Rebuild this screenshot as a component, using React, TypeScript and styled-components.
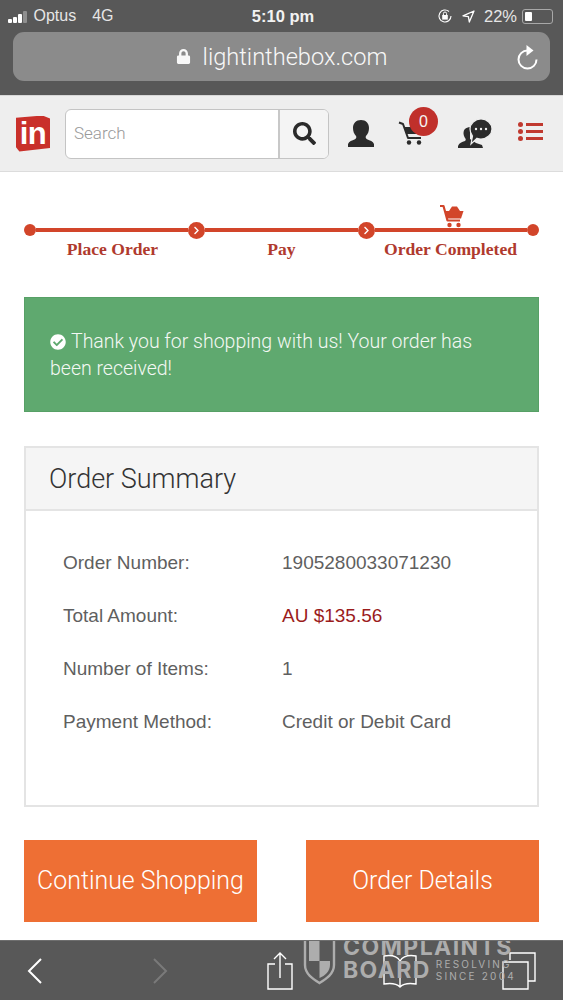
import React from 'react'
import styled, { createGlobalStyle } from 'styled-components'
import { FaCheckCircle, FaSearch, FaLock, FaChevronRight } from 'react-icons/fa'

const GlobalStyle = createGlobalStyle`
  html, body {
    margin: 0;
    padding: 0;
    background: #fff;
  }
  * {
    box-sizing: border-box;
  }
`

const summary = [
  { label: 'Order Number:', value: '1905280033071230' },
  { label: 'Total Amount:', value: 'AU $135.56', accent: true },
  { label: 'Number of Items:', value: '1' },
  { label: 'Payment Method:', value: 'Credit or Debit Card' },
]

const UserIcon = () => (
  <svg width="26" height="27" viewBox="0 0 26 27">
    <path
      d="M13 0c5 0 8 3.5 8 8 0 3-1 6-3 8-.6 1-.4 2.5 1 3.2 3 1.3 6 2 7 4.8v3H0v-3c1-2.8 4-3.5 7-4.8 1.4-.7 1.6-2.200 1-3.200-2-2-3-5-3-8 0-4.500 3-8 8-8z"
      fill="#2b2b2b"
    />
  </svg>
)

const CartIcon = () => (
  <svg width="26" height="24" viewBox="0 0 26 24" fill="none">
    <path d="M1 1.5l4 1.500 5 14h13" stroke="#2b2b2b" strokeWidth="2" strokeLinejoin="round" />
    <path d="M6 6h19l-2 7H8.5z" fill="#2b2b2b" />
    <circle cx="11" cy="21.5" r="2.2" fill="#2b2b2b" />
    <circle cx="21" cy="21.5" r="2.2" fill="#2b2b2b" />
  </svg>
)

const ChatUser = () => (
  <svg width="35" height="30" viewBox="0 0 35 30">
    <path
      d="M0 29v-2c1-3 4-4 7-5 1-1 1-2 0-3-2-3-2-7 0-9 1-1 3-2 5-2v12l6 4 6 2 1 3z"
      fill="#2b2b2b"
    />
    <path
      d="M23 0c6 0 11 4.5 11 10s-5 10-11 10c-1.500 0-3-.3-4-.7L13 25l1.500-8C13 15 12 12.500 12 10 12 4.500 17 0 23 0z"
      fill="#2b2b2b"
      stroke="#eeeeee"
      strokeWidth="1.2"
    />
    <circle cx="18" cy="10" r="1.2" fill="#eee" />
    <circle cx="23" cy="10" r="1.2" fill="#eee" />
    <circle cx="28" cy="10" r="1.2" fill="#eee" />
  </svg>
)

const StepCart = () => (
  <svg width="25" height="24" viewBox="0 0 25 24" fill="none">
    <path d="M1 2h3.5l4 14.500h12.500" stroke="#d2452a" strokeWidth="2.2" strokeLinejoin="round" />
    <path d="M6 7h18.5l-2.500 7.500H8z" fill="#d2452a" />
    <path d="M10 7l3-4.500h5L21 7z" fill="#d2452a" />
    <circle cx="10.5" cy="21" r="2.2" fill="#d2452a" />
    <circle cx="19.5" cy="21" r="2.2" fill="#d2452a" />
  </svg>
)

const Reload = () => (
  <svg width="24" height="26" viewBox="0 0 24 26" fill="none">
    <path d="M12.5 6.5a9 9 0 1 0 9 9" stroke="#fff" strokeWidth="2" />
    <path d="M11.5 1l7 5.500-7 5.500z" fill="#fff" />
  </svg>
)

const Watermark = () => (
  <WatermarkWrap>
    <svg width="33" height="46" viewBox="0 0 33 46" fill="none">
      <path d="M2 0v26c0 9 8 14 14.5 18C23 40 31 35 31 26V0" stroke="#adadad" strokeWidth="2.4" />
      <path d="M6 2h10.500v20H6z" fill="#adadad" />
      <path d="M16.5 22H27v4c0 6-5 11-10.500 13z" fill="#adadad" />
    </svg>
    <WatermarkText>
      <WatermarkTitle>COMPLAINTS</WatermarkTitle>
      <WatermarkRow>
        <WatermarkTitle>BOARD</WatermarkTitle>
        <WatermarkSmall>RESOLVING<br />SINCE 2004</WatermarkSmall>
      </WatermarkRow>
    </WatermarkText>
  </WatermarkWrap>
)

export default function App() {
  return (
    <Page>
      <GlobalStyle />
      <BrowserTop>
        <StatusBar>
          <StatusLeft>
            <Signal>
              {[4, 6, 9, 12].map((h, i) => (
                <SignalBar key={h} $height={h} $off={i === 3} />
              ))}
            </Signal>
            <span>Optus</span>
            <NetworkType>4G</NetworkType>
          </StatusLeft>
          <Clock>5:10 pm</Clock>
          <StatusRight>
            <svg width="16" height="16" viewBox="0 0 16 16" fill="none">
              <path d="M14 8a6 6 0 1 1-2-4.500" stroke="#fff" strokeWidth="1.1" />
              <rect x="5.2" y="7" width="5.6" height="4.6" fill="#fff" />
              <path d="M6.4 7V5.600a1.600 1.600 0 0 1 3.200 0V7" stroke="#fff" strokeWidth="1" />
            </svg>
            <svg width="13" height="13" viewBox="0 0 13 13" fill="none">
              <path d="M12 1L1 5.800l5.400.8.9 5.400z" stroke="#fff" strokeWidth="1.3" strokeLinejoin="round" />
            </svg>
            <span>22%</span>
            <Battery>
              <BatteryFill />
            </Battery>
          </StatusRight>
        </StatusBar>
        <UrlBar>
          <UrlText>
            <FaLock size={15} />
            <span>lightinthebox.com</span>
          </UrlText>
          <ReloadSlot>
            <Reload />
          </ReloadSlot>
        </UrlBar>
      </BrowserTop>

      <SiteHeader>
        <Logo>in</Logo>
        <SearchBox>
          <SearchInput>Search</SearchInput>
          <SearchButton>
            <FaSearch size={23} color="#2b2b2b" />
          </SearchButton>
        </SearchBox>
        <HeaderIcons>
          <UserIcon />
          <CartWrap>
            <CartIcon />
            <CartBadge>0</CartBadge>
          </CartWrap>
          <ChatUser />
          <MenuIcon>
            {[0, 1, 2].map((i) => (
              <MenuLine key={i}>
                <MenuDot />
                <MenuBar />
              </MenuLine>
            ))}
          </MenuIcon>
        </HeaderIcons>
      </SiteHeader>

      <Main>
        <Steps>
          <StepTrack>
            <TrackCart>
              <StepCart />
            </TrackCart>
            <TrackDot />
            <TrackLine />
            <TrackChevron>
              <FaChevronRight size={9} color="#fff" />
            </TrackChevron>
            <TrackLine />
            <TrackChevron>
              <FaChevronRight size={9} color="#fff" />
            </TrackChevron>
            <TrackLine />
            <TrackDot />
          </StepTrack>
          <StepLabels>
            <StepLabel>Place Order</StepLabel>
            <StepLabel>Pay</StepLabel>
            <StepLabel>Order Completed</StepLabel>
          </StepLabels>
        </Steps>

        <Alert>
          <AlertIcon>
            <FaCheckCircle size={16} color="#fff" />
          </AlertIcon>
          Thank you for shopping with us! Your order has been received!
        </Alert>

        <Panel>
          <PanelHead>Order Summary</PanelHead>
          <PanelBody>
            {summary.map((row) => (
              <SummaryRow key={row.label}>
                <SummaryLabel>{row.label}</SummaryLabel>
                <SummaryValue $accent={row.accent}>{row.value}</SummaryValue>
              </SummaryRow>
            ))}
          </PanelBody>
        </Panel>

        <Actions>
          <ActionButton>Continue Shopping</ActionButton>
          <ActionButton>Order Details</ActionButton>
        </Actions>
      </Main>

      <Toolbar>
        <ToolSlot>
          <svg width="18" height="28" viewBox="0 0 18 28" fill="none">
            <path d="M15 2L3 14l12 12" stroke="#fff" strokeWidth="2" />
          </svg>
        </ToolSlot>
        <ToolSlot>
          <svg width="18" height="28" viewBox="0 0 18 28" fill="none">
            <path d="M3 2l12 12L3 26" stroke="#7a7a7a" strokeWidth="2" />
          </svg>
        </ToolSlot>
        <ToolSlot>
          <svg width="28" height="40" viewBox="0 0 28 40" fill="none">
            <path d="M9 13H2v25h24V13h-7" stroke="#fff" strokeWidth="1.4" />
            <path d="M14 27V2M8 8l6-6 6 6" stroke="#fff" strokeWidth="1.4" />
          </svg>
        </ToolSlot>
        <ToolSlot>
          <svg width="36" height="36" viewBox="0 0 36 36" fill="none">
            <path d="M18 8C15 3 8 2 2 3v28c6-1 12-1 16 3 4-4 10-4 16-3V3c-6-1-13 0-16 5zM18 8v26" stroke="#fff" strokeWidth="1.4" />
          </svg>
        </ToolSlot>
        <ToolSlot>
          <svg width="36" height="38" viewBox="0 0 36 38" fill="none">
            <path d="M9 8V1h25v28h-7" stroke="#fff" strokeWidth="1.4" />
            <path d="M2 10h25v27H2z" stroke="#fff" strokeWidth="1.4" />
          </svg>
        </ToolSlot>
        <Watermark />
      </Toolbar>
    </Page>
  )
}

const Page = styled.div`
  position: relative;
  width: 563px;
  height: 1000px;
  overflow: hidden;
  display: flex;
  flex-direction: column;
  font-family: 'Liberation Sans', Arial, sans-serif;
  background: #fff;
`

const BrowserTop = styled.div`
  height: 95px;
  flex: none;
  background: #585858;
  color: #fff;
  padding: 0 13px;
`

const StatusBar = styled.div`
  height: 32px;
  margin: 0 -5px;
  display: grid;
  grid-template-columns: 1fr auto 1fr;
  align-items: center;
  font-size: 16px;
`

const StatusLeft = styled.div`
  display: flex;
  align-items: center;
  gap: 6px;
  color: #e6e6e6;
`

const Signal = styled.div`
  display: flex;
  align-items: flex-end;
  gap: 1.5px;
  height: 13px;
  margin-right: 1px;
`

const SignalBar = styled.span<{ $height: number; $off?: boolean }>`
  width: 3.5px;
  height: ${(p) => p.$height}px;
  border-radius: 1px;
  background: ${(p) => (p.$off ? '#8f8f8f' : '#fff')};
`

const NetworkType = styled.span`
  margin-left: 10px;
`

const Clock = styled.div`
  font-weight: 700;
  font-size: 16.5px;
  color: #f2f2f2;
  margin-left: 3px;
`

const StatusRight = styled.div`
  display: flex;
  justify-content: flex-end;
  align-items: center;
  gap: 9px;
  color: #e6e6e6;
  font-size: 16.5px;
  margin-right: 2px;
`

const Battery = styled.div`
  width: 31px;
  height: 15px;
  margin-left: -4px;
  padding: 2px;
  border: 1px solid #a8a8a8;
  border-radius: 3px;
`

const BatteryFill = styled.div`
  width: 7px;
  height: 100%;
  background: #fff;
  border-radius: 1px;
`

const UrlBar = styled.div`
  position: relative;
  height: 49px;
  border-radius: 11px;
  background: #8b8b8b;
  display: flex;
  align-items: center;
  justify-content: center;
`

const UrlText = styled.div`
  display: flex;
  align-items: center;
  gap: 12px;
  font-family: Roboto, 'Liberation Sans', sans-serif;
  font-weight: 300;
  font-size: 23.6px;
  color: #f8f8f8;
`

const ReloadSlot = styled.div`
  position: absolute;
  right: 11px;
  top: 12px;
  display: flex;
`

const SiteHeader = styled.header`
  height: 77px;
  flex: none;
  background: #eeeeee;
  border-bottom: 1px solid #dcdcdc;
  border-top: 1px solid #d8d8d8;
  padding: 0 16px;
  display: flex;
  align-items: center;
`

const Logo = styled.div`
  width: 34px;
  height: 36px;
  flex: none;
  background: #c9302a;
  color: #fff;
  font-weight: 700;
  font-size: 31px;
  line-height: 35px;
  text-align: center;
  letter-spacing: -0.5px;
  clip-path: polygon(0 6%, 78% 0, 100% 8%, 100% 90%, 10% 100%, 0 88%);
`

const SearchBox = styled.div`
  width: 264px;
  height: 50px;
  margin-left: 15px;
  flex: none;
  display: flex;
  background: #fff;
  border: 1px solid #c4c4c4;
  border-radius: 6px;
  overflow: hidden;
`

const SearchInput = styled.div`
  flex: 1;
  padding-left: 8px;
  font-family: Roboto, 'Liberation Sans', sans-serif;
  font-weight: 300;
  font-size: 17px;
  line-height: 46px;
  color: #9a9a9a;
  border-right: 2px solid #c8c8c8;
`

const SearchButton = styled.div`
  width: 48px;
  flex: none;
  background: #f4f4f4;
  display: flex;
  align-items: center;
  justify-content: center;
`

const HeaderIcons = styled.div`
  display: flex;
  align-items: center;
  margin-left: 19px;
  gap: 24px;
`

const CartWrap = styled.div`
  position: relative;
  display: flex;
  margin: -2px 10px 0 0;
`

const CartBadge = styled.span`
  position: absolute;
  top: -14px;
  left: 11px;
  width: 29px;
  height: 29px;
  border-radius: 50%;
  background: #c0302b;
  color: #f5f5f5;
  font-size: 16px;
  line-height: 29px;
  text-align: center;
`

const MenuIcon = styled.div`
  display: flex;
  flex-direction: column;
  gap: 2px;
  margin: -5px 0 0 1px;
`

const MenuLine = styled.div`
  display: flex;
  align-items: center;
  gap: 3px;
`

const MenuDot = styled.span`
  width: 5px;
  height: 5px;
  border-radius: 50%;
  background: #c0392f;
`

const MenuBar = styled.span`
  width: 17px;
  height: 3px;
  background: #c0392f;
`

const Main = styled.main`
  flex: 1;
  padding: 0 24px;
  display: flex;
  flex-direction: column;
`

const Steps = styled.div`
  height: 125px;
  flex: none;
  padding-top: 50px;
`

const StepTrack = styled.div`
  position: relative;
  height: 16px;
  display: flex;
  align-items: center;
`

const TrackCart = styled.div`
  position: absolute;
  top: -18px;
  left: 415px;
  display: flex;
`

const TrackDot = styled.span`
  width: 12px;
  height: 12px;
  flex: none;
  border-radius: 50%;
  background: #d2452a;
`

const TrackLine = styled.span`
  flex: 1;
  height: 4px;
  background: #d2452a;
`

const TrackChevron = styled.span`
  width: 17px;
  height: 17px;
  flex: none;
  border-radius: 50%;
  background: #d2452a;
  display: flex;
  align-items: center;
  justify-content: center;
`

const StepLabels = styled.div`
  display: grid;
  grid-template-columns: repeat(3, 1fr);
  margin: 1px 4px 0;
`

const StepLabel = styled.div`
  text-align: center;
  font-family: 'Liberation Serif', 'Times New Roman', serif;
  font-weight: 700;
  font-size: 17.6px;
  line-height: 20px;
  color: #b03a2e;
`

const Alert = styled.div`
  height: 115px;
  flex: none;
  padding: 30px 25px 0;
  background: #5fa96f;
  border: 1px solid #57a066;
  color: #f4f8f4;
  font-family: Roboto, 'Liberation Sans', sans-serif;
  font-weight: 300;
  font-size: 19.5px;
  line-height: 27px;
`

const AlertIcon = styled.span`
  display: inline-flex;
  vertical-align: -2px;
  margin-right: 5px;
`

const Panel = styled.section`
  height: 361px;
  flex: none;
  margin-top: 34px;
  border: 2px solid #e4e4e4;
  display: flex;
  flex-direction: column;
`

const PanelHead = styled.h2`
  margin: 0;
  height: 63px;
  flex: none;
  padding: 0 23px;
  background: #f5f5f5;
  border-bottom: 2px solid #e4e4e4;
  font-family: Roboto, 'Liberation Sans', sans-serif;
  font-size: 27px;
  font-weight: 300;
  line-height: 62px;
  color: #333;
`

const PanelBody = styled.div`
  padding: 25px 37px 0;
  display: flex;
  flex-direction: column;
`

const SummaryRow = styled.div`
  height: 53px;
  display: grid;
  grid-template-columns: 219px 1fr;
  align-items: center;
  font-size: 19px;
  color: #5f5f5f;
`

const SummaryLabel = styled.div``

const SummaryValue = styled.div<{ $accent?: boolean }>`
  color: ${(p) => (p.$accent ? '#9b1c1c' : '#5f5f5f')};
`

const Actions = styled.div`
  margin-top: 33px;
  display: grid;
  grid-template-columns: 233px 233px;
  justify-content: space-between;
`

const ActionButton = styled.div`
  height: 82px;
  background: #ee6f34;
  color: #fff;
  font-family: Roboto, 'Liberation Sans', sans-serif;
  font-weight: 300;
  font-size: 24.9px;
  line-height: 82px;
  text-align: center;
`

const Toolbar = styled.div`
  position: relative;
  height: 60px;
  flex: none;
  overflow: hidden;
  background: #585858;
  border-top: 1px solid #6e6e6e;
  display: grid;
  grid-template-columns: 70px 180px 60px 180px 58px;
  align-items: center;
  justify-items: center;
`

const ToolSlot = styled.div`
  display: flex;
`

const WatermarkWrap = styled.div`
  position: absolute;
  left: 303px;
  top: -2px;
  display: flex;
  gap: 7px;
  color: #adadad;
`

const WatermarkText = styled.div`
  display: flex;
  flex-direction: column;
  margin-top: -1px;
`

const WatermarkTitle = styled.div`
  font-family: Inter, 'Liberation Sans', sans-serif;
  font-weight: 700;
  font-size: 23px;
  line-height: 19px;
  letter-spacing: 1.4px;
`

const WatermarkRow = styled.div`
  display: flex;
  align-items: center;
  gap: 5px;
  margin-top: 1px;
`

const WatermarkSmall = styled.div`
  font-family: Inter, 'Liberation Sans', sans-serif;
  font-size: 10px;
  line-height: 12px;
  letter-spacing: 2.2px;
`
